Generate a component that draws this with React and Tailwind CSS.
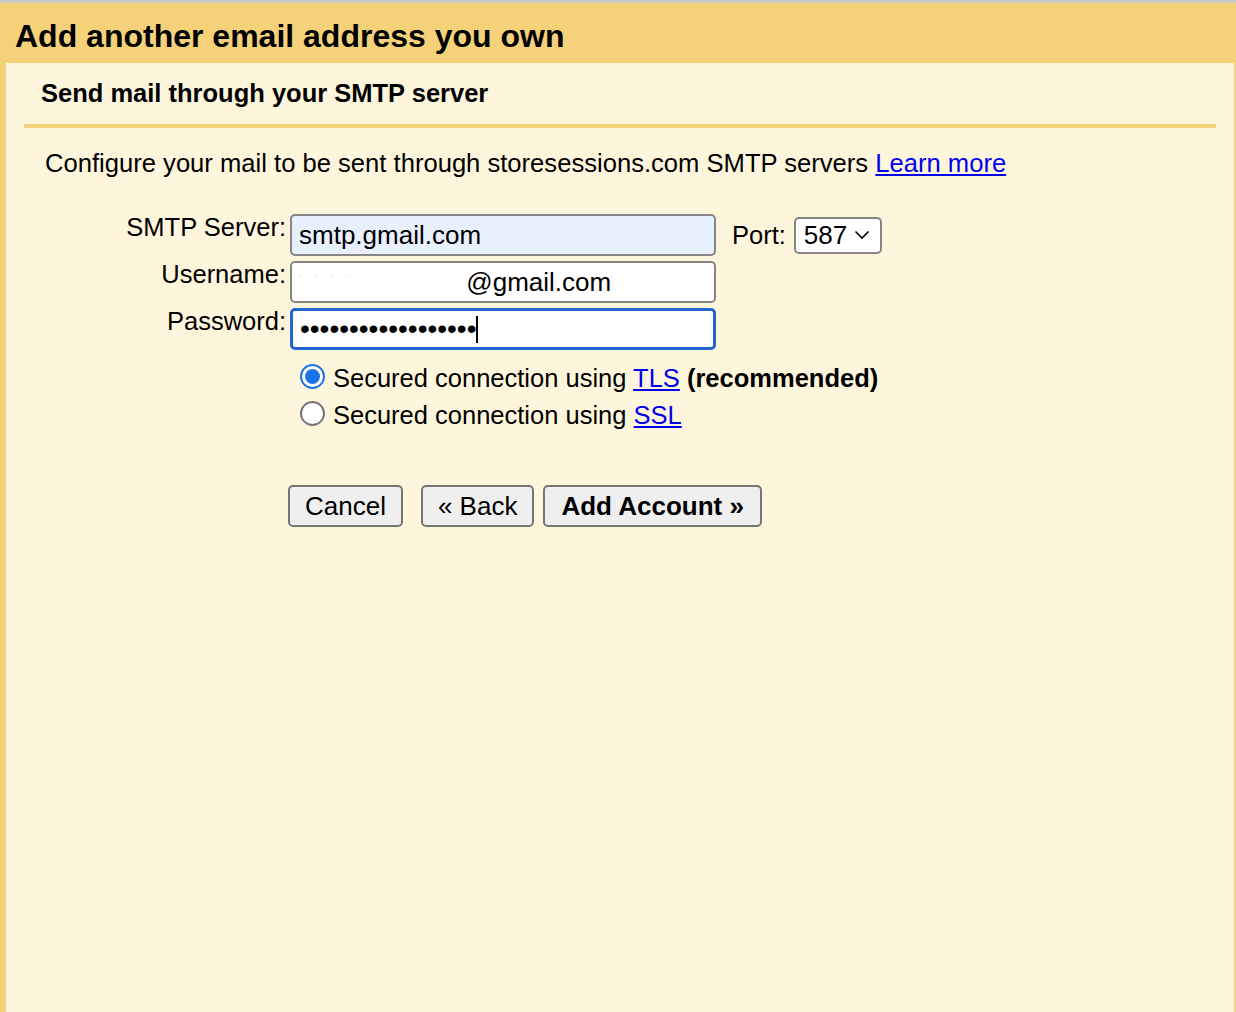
import React from "react";

const labelCls = "w-[266px] shrink-0 text-right pr-[4px] -mt-[2px] text-[25.5px] leading-[30px]";
const boxCls =
  "w-[426px] h-[42px] shrink-0 rounded-[5px] px-[7px] flex items-center text-[26px]";

function Radio({ checked }) {
  return checked ? (
    <span className="w-[25px] h-[25px] rounded-full border-2 border-[#1a73e8] bg-white flex items-center justify-center shrink-0">
      <span className="w-[15px] h-[15px] rounded-full bg-[#1a73e8]" />
    </span>
  ) : (
    <span className="w-[25px] h-[25px] rounded-full border-2 border-[#767676] bg-white shrink-0" />
  );
}

function Button({ children, bold }) {
  return (
    <button
      className={`h-[42px] rounded-[5px] border-2 border-[#767676] bg-[#efefef] text-[26px] leading-none ${
        bold ? "font-bold px-[16px]" : "px-[15px]"
      }`}
    >
      {children}
    </button>
  );
}

export default function App() {
  return (
    <div className="min-h-screen bg-[#fef6dc] text-black font-['Liberation_Sans',Arial,sans-serif]">
      <div className="h-[3px] bg-[#c9c9c9]" />
      <div className="h-[60px] bg-[#f5d279] px-[15px] flex items-center">
        <h1 className="text-[32px] font-bold leading-none pt-[5px]">Add another email address you own</h1>
      </div>
      <div className="min-h-[949px] border-l-[6px] border-r-[2px] border-[#f5d279] bg-[#fef6dc] px-[18px]">
        <div className="h-[61px] flex items-center pl-[17px]">
          <h2 className="text-[25.5px] font-bold leading-none pt-[1px]">Send mail through your SMTP server</h2>
        </div>
        <div className="h-[4px] bg-[#f5d279]" />

        <p className="pl-[21px] pt-[20px] text-[25.6px] leading-[30px]">
          Configure your mail to be sent through storesessions.com SMTP servers{" "}
          <a href="#" className="text-[#0000ee] underline">
            Learn more
          </a>
        </p>

        <div className="mt-[36px] flex flex-col gap-[5px]">
          <div className="flex items-start">
            <div className={labelCls}>SMTP Server:</div>
            <div className={`${boxCls} border-2 border-[#858585] bg-[#e8f0fe]`}>smtp.gmail.com</div>
            <div className="ml-[16px] mt-[2px] flex items-center">
              <span className="text-[25.5px] mr-[8px]">Port:</span>
              <div className="h-[37px] w-[88px] rounded-[5px] border-2 border-[#858585] bg-white flex items-center pl-[8px] text-[26px]">
                <span>587</span>
                <svg className="ml-[7px]" width="16" height="10" viewBox="0 0 16 10" fill="none">
                  <path d="M1.5 1.5 L8 8 L14.5 1.5" stroke="#000" strokeWidth="1.6" />
                </svg>
              </div>
            </div>
          </div>

          <div className="flex items-start">
            <div className={labelCls}>Username:</div>
            <div className={`${boxCls} border-2 border-[#858585] bg-white`}>
              <span className="text-[#d0d0d0] text-[10px] tracking-[12px] -mt-[14px]">&middot;&middot;&middot;&middot;</span>
              <span className="ml-[106px]">@gmail.com</span>
            </div>
          </div>

          <div className="flex items-start">
            <div className={labelCls}>Password:</div>
            <div className={`${boxCls} border-[3px] border-[#2465cf] bg-white px-[6px]`}>
              <span className="text-[28px] leading-none">••••••••••••••••••</span>
              <span className="w-[2px] h-[27px] bg-black" />
            </div>
          </div>
        </div>

        <div className="ml-[276px] mt-[12px] flex flex-col gap-[8px] text-[25.5px] leading-[25px]">
          <label className="flex items-center gap-[8px]">
            <Radio checked />
            <span className="pt-[4px]">
              Secured connection using{" "}
              <a href="#" className="text-[#0000ee] underline">
                TLS
              </a>{" "}
              <b>(recommended)</b>
            </span>
          </label>
          <label className="flex items-center gap-[8px]">
            <Radio />
            <span className="pt-[4px]">
              Secured connection using{" "}
              <a href="#" className="text-[#0000ee] underline">
                SSL
              </a>
            </span>
          </label>
        </div>

        <div className="ml-[264px] mt-[57px] flex items-center">
          <Button>Cancel</Button>
          <div className="w-[18px]" />
          <Button>« Back</Button>
          <div className="w-[9px]" />
          <Button bold>Add Account »</Button>
        </div>
      </div>
    </div>
  );
}
